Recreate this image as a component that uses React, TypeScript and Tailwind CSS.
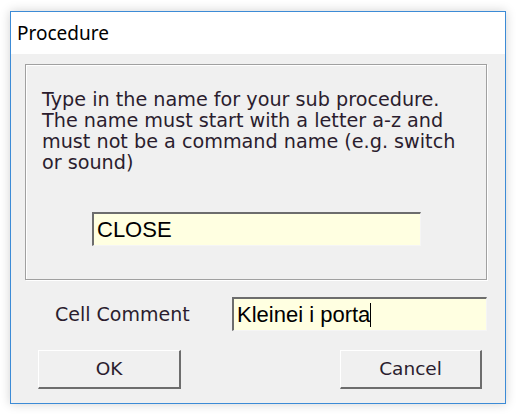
import React from "react";

export default function App() {
  return (
    <div className="w-[518px] h-[414px] bg-white pt-[11px] pl-[10px]">
      <div className="w-[496px] h-[393px] border border-[#3c8bd6] bg-[#f0f0f0] flex flex-col shadow-[0_0_10px_rgba(0,0,0,0.18)]">
        <div className="h-[42px] bg-white flex items-center pl-[6px] text-[19px] text-black" style={{ fontFamily: '"Noto Sans", sans-serif' }}>
          Procedure
        </div>
        <div className="flex flex-col pl-[14px] pt-[10px]" style={{ fontFamily: '"DejaVu Sans", Verdana, sans-serif' }}>
          <div className="w-[462px] h-[216px] border border-[#a0a0a0] shadow-[inset_1px_1px_0_#ffffff,1px_1px_0_#ffffff] flex flex-col">
            <div className="pl-[16px] pt-[24px] text-[19.2px] leading-[21px] text-[#2b1d2e] whitespace-nowrap">
              Type in the name for your sub procedure.
              <br />
              The name must start with a letter a-z and
              <br />
              must not be a command name (e.g. switch
              <br />
              or sound)
            </div>
            <div className="ml-[66px] mt-[39px] w-[329px] h-[34px] bg-[#ffffe1] border-t-2 border-l-2 border-[#6d6d6d] border-b border-r border-b-[#f5f5f5] border-r-[#f5f5f5] flex items-center pl-[3px] text-[22px] text-black" style={{ fontFamily: '"Liberation Sans", Arial, sans-serif' }}>
              CLOSE
            </div>
          </div>
          <div className="flex items-center mt-[17px]">
            <div className="w-[207px] pl-[30px] text-[19px] text-[#2b1d2e] whitespace-nowrap">Cell Comment</div>
            <div className="w-[255px] h-[34px] bg-[#ffffe1] border-t-2 border-l-2 border-[#6d6d6d] border-b border-r border-b-[#f5f5f5] border-r-[#f5f5f5] flex items-center pl-[3px] text-[22px] text-black" style={{ fontFamily: '"Liberation Sans", Arial, sans-serif' }}>
              Kleinei i porta<span className="inline-block w-[1px] h-[24px] bg-black"></span>
            </div>
          </div>
          <div className="flex mt-[19px] pl-[13px]">
            <div className="w-[143px] h-[39px] bg-[#f0f0f0] border-t border-l border-white border-b-2 border-r-2 border-b-[#6d6d6d] border-r-[#6d6d6d] flex items-center justify-center text-[18.5px] text-[#2b1d2e]">
              OK
            </div>
            <div className="ml-[159px] w-[142px] h-[39px] bg-[#f0f0f0] border-t border-l border-white border-b-2 border-r-2 border-b-[#6d6d6d] border-r-[#6d6d6d] flex items-center justify-center text-[18.5px] text-[#2b1d2e]">
              Cancel
            </div>
          </div>
        </div>
      </div>
    </div>
  );
}
